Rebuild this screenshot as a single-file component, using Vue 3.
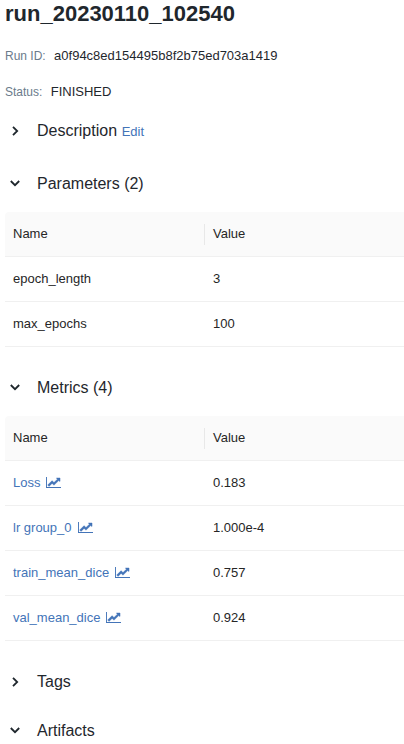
<script setup>
const fields = [
  { label: 'Run ID:', value: 'a0f94c8ed154495b8f2b75ed703a1419' },
  { label: 'Status:', value: 'FINISHED' },
]
const sections = [
  { key: 'description', title: 'Description', open: false, edit: true },
  {
    key: 'parameters', title: 'Parameters (2)', open: true,
    rows: [['epoch_length', '3'], ['max_epochs', '100']],
  },
  {
    key: 'metrics', title: 'Metrics (4)', open: true, chart: true,
    rows: [['Loss', '0.183'], ['lr group_0', '1.000e-4'], ['train_mean_dice', '0.757'], ['val_mean_dice', '0.924']],
  },
  { key: 'tags', title: 'Tags', open: false },
  { key: 'artifacts', title: 'Artifacts', open: true },
]
</script>

<template>
  <main class="run">
    <h1>run_20230110_102540</h1>
    <div v-for="f in fields" :key="f.label" class="field">
      <span class="label">{{ f.label }}</span>
      <span>{{ f.value }}</span>
    </div>
    <section v-for="s in sections" :key="s.key" :class="s.key">
      <div class="heading">
        <svg class="chevron" :class="{ open: s.open }" viewBox="0 0 12 12" width="12" height="12">
          <path d="M4 1.8 8.2 6 4 10.2" fill="none" stroke="currentColor" stroke-width="1.8" />
        </svg>
        <h2>{{ s.title }}</h2>
        <a v-if="s.edit" class="edit">Edit</a>
      </div>
      <div v-if="s.rows" class="table">
        <div class="row head">
          <div class="cell name">Name</div>
          <div class="cell">Value</div>
        </div>
        <div v-for="r in s.rows" :key="r[0]" class="row">
          <div class="cell name">
            <a v-if="s.chart" class="metric">
              <span>{{ r[0] }}</span>
              <svg class="chart" viewBox="0 128 2048 1536" width="15" height="11" preserveAspectRatio="none">
                <path fill="currentColor" d="M2048 1520v144h-2048v-1536h128v1392h1920z" />
                <path fill="currentColor" stroke="currentColor" stroke-width="50" d="M1920 288v435q0 21-19.5 29.5t-35.5-7.5l-121-121-633 633q-10 10-23 10t-23-10l-233-233-416 416-192-192 585-585q10-10 23-10t23 10l233 233 464-464-121-121q-16-16-7.5-35.5t29.5-19.5h435q14 0 23 9t9 23z" />
              </svg>
            </a>
            <template v-else>{{ r[0] }}</template>
          </div>
          <div class="cell">{{ r[1] }}</div>
        </div>
      </div>
    </section>
  </main>
</template>

<style>
html, body { background: #fff; overflow: hidden; }
</style>

<style scoped>
.run {
  height: 744px;
  overflow: hidden;
  padding-left: 5px;
  font-family: "Liberation Sans", Arial, sans-serif;
  font-size: 13px;
  line-height: 20px;
  color: #1f272d;
}
h1 { margin: 0 0 18px; font-size: 22px; line-height: 28px; font-weight: 700; }
.field { display: flex; align-items: center; gap: 8.4px; height: 20px; margin-bottom: 16px; }
.label { color: #6b7b8b; font-size: 12px; }
.description { margin-top: 17px; }
.heading { display: flex; align-items: center; height: 24px; }
h2 { margin: 0; font-size: 16px; line-height: 24px; font-weight: 400; }
.chevron { flex: none; margin: 0 16px 0 4px; }
.chevron.open { margin-bottom: 2px; transform: rotate(90deg); }
.edit { margin: 2px 0 0 4.6px; }
a { color: #4374b8; }
.parameters { margin-top: 29px; }
.metrics { margin-top: 29px; }
.tags { margin-top: 29px; }
.artifacts { margin-top: 25px; }
.table { margin-top: 16px; color: #262626; }
.row { display: flex; height: 44px; border-bottom: 1px solid #f0f0f0; }
.cell { display: flex; align-items: center; flex: 1; padding: 0 8px; }
.name { flex: 0 0 200px; box-sizing: border-box; }
.head { background: #fafafa; border-radius: 4px 0 0 0; }
.head .name { background: linear-gradient(#e8e8e8, #e8e8e8) right center / 1px 21px no-repeat; }
.metric { display: flex; align-items: center; gap: 6px; }
.chart { display: block; margin-bottom: 1px; }
</style>
